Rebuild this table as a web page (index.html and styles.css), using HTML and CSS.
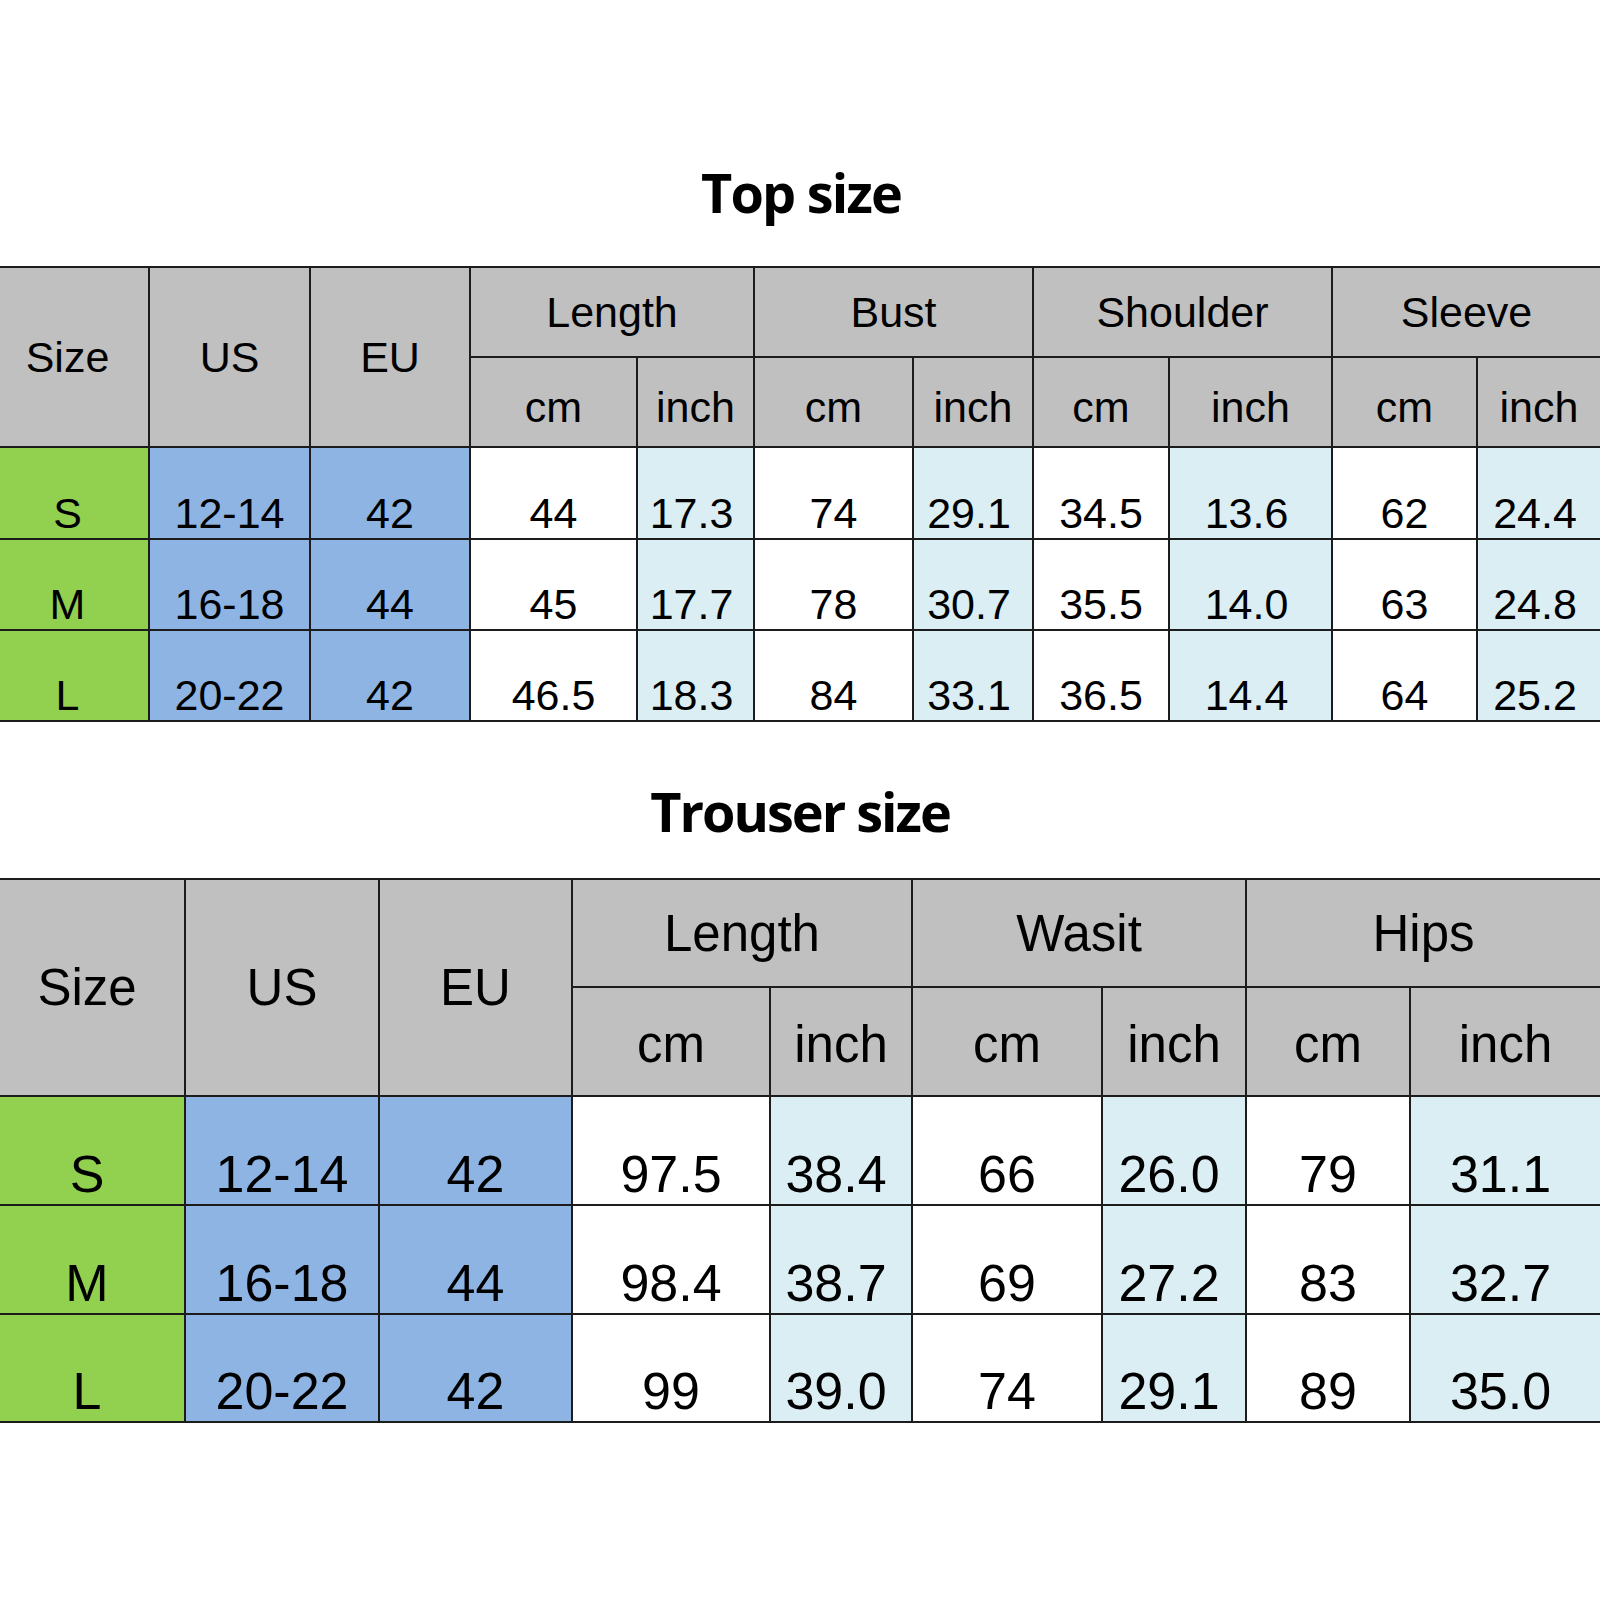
FILE: index.html
```html
<!DOCTYPE html>
<html lang="en">
<head>
<meta charset="utf-8">
<title>Size chart</title>
<link rel="stylesheet" href="styles.css">
</head>
<body>
<section class="chart chart-top">
  <h2 class="title">Top size</h2>
  <div class="grid grid-top">
    <div class="c h span-r">Size</div>
    <div class="c h span-r">US</div>
    <div class="c h span-r">EU</div>
    <div class="c h span-c">Length</div>
    <div class="c h span-c">Bust</div>
    <div class="c h span-c">Shoulder</div>
    <div class="c h span-c last">Sleeve</div>
    <div class="c h sub">cm</div><div class="c h sub">inch</div>
    <div class="c h sub">cm</div><div class="c h sub">inch</div>
    <div class="c h sub">cm</div><div class="c h sub">inch</div>
    <div class="c h sub">cm</div><div class="c h sub last">inch</div>

    <div class="c d green">S</div><div class="c d blue">12-14</div><div class="c d blue">42</div>
    <div class="c d white">44</div><div class="c d light">17.3</div>
    <div class="c d white">74</div><div class="c d light">29.1</div>
    <div class="c d white">34.5</div><div class="c d light">13.6</div>
    <div class="c d white">62</div><div class="c d light last">24.4</div>

    <div class="c d green">M</div><div class="c d blue">16-18</div><div class="c d blue">44</div>
    <div class="c d white">45</div><div class="c d light">17.7</div>
    <div class="c d white">78</div><div class="c d light">30.7</div>
    <div class="c d white">35.5</div><div class="c d light">14.0</div>
    <div class="c d white">63</div><div class="c d light last">24.8</div>

    <div class="c d green">L</div><div class="c d blue">20-22</div><div class="c d blue">42</div>
    <div class="c d white">46.5</div><div class="c d light">18.3</div>
    <div class="c d white">84</div><div class="c d light">33.1</div>
    <div class="c d white">36.5</div><div class="c d light">14.4</div>
    <div class="c d white">64</div><div class="c d light last">25.2</div>
  </div>
</section>

<section class="chart chart-bottom">
  <h2 class="title">Trouser size</h2>
  <div class="grid grid-bottom">
    <div class="c h span-r">Size</div>
    <div class="c h span-r">US</div>
    <div class="c h span-r">EU</div>
    <div class="c h span-c">Length</div>
    <div class="c h span-c">Wasit</div>
    <div class="c h span-c last">Hips</div>
    <div class="c h sub">cm</div><div class="c h sub">inch</div>
    <div class="c h sub">cm</div><div class="c h sub">inch</div>
    <div class="c h sub">cm</div><div class="c h sub last">inch</div>

    <div class="c d green">S</div><div class="c d blue">12-14</div><div class="c d blue">42</div>
    <div class="c d white">97.5</div><div class="c d light">38.4</div>
    <div class="c d white">66</div><div class="c d light">26.0</div>
    <div class="c d white">79</div><div class="c d light last">31.1</div>

    <div class="c d green">M</div><div class="c d blue">16-18</div><div class="c d blue">44</div>
    <div class="c d white">98.4</div><div class="c d light">38.7</div>
    <div class="c d white">69</div><div class="c d light">27.2</div>
    <div class="c d white">83</div><div class="c d light last">32.7</div>

    <div class="c d green">L</div><div class="c d blue">20-22</div><div class="c d blue">42</div>
    <div class="c d white">99</div><div class="c d light">39.0</div>
    <div class="c d white">74</div><div class="c d light">29.1</div>
    <div class="c d white">89</div><div class="c d light last">35.0</div>
  </div>
</section>
</body>
</html>
```
FILE: styles.css
```css
html, body {
  margin: 0;
  padding: 0;
  background: #ffffff;
}

body {
  width: 1600px;
  overflow: hidden;
  font-family: "Liberation Sans", Arial, sans-serif;
  color: #000;
}

.chart {
  display: flex;
  flex-direction: column;
}

.title {
  margin: 0;
  height: 76px;
  line-height: 76px;
  font-family: "Open Sans", "Noto Sans", sans-serif;
  font-weight: 700;
  font-size: 54px;
  letter-spacing: -1.8px;
  text-align: center;
  color: #000;
}

.chart-top {
  padding-top: 154px;
}

.chart-top .title {
  margin-bottom: 36px;
  padding-left: 2px;
}

.chart-bottom {
  padding-top: 51px;
}

.chart-bottom .title {
  margin-bottom: 29px;
  letter-spacing: -2px;
}

.grid {
  display: grid;
  border-top: 2px solid #1c1c1c;
}

.grid-top {
  width: 1613px;
  margin-left: -13px;
  grid-template-columns: 163px 161px 160px 167px 117px 159px 120px 136px 163px 145px 122px;
  grid-template-rows: 90px 90px 92px 91px 91px;
  font-size: 43px;
}

.grid-bottom {
  width: 1610px;
  margin-left: -10px;
  grid-template-columns: 196px 194px 193px 198px 142px 190px 144px 164px 189px;
  grid-template-rows: 108px 109px 109px 109px 108px;
  font-size: 52px;
}

.grid-bottom .h {
  font-size: 51px;
}

.c {
  box-sizing: border-box;
  border-right: 2px solid #1c1c1c;
  border-bottom: 2px solid #1c1c1c;
  display: flex;
  justify-content: center;
  white-space: nowrap;
}

.c.last {
  border-right: 0;
}

.h {
  background: #c0c0c0;
  align-items: center;
}

.span-r {
  grid-row: span 2;
}

.span-c {
  grid-column: span 2;
}

.sub {
  padding-top: 10px;
}

.grid-bottom .sub {
  padding-top: 6px;
}

.d {
  align-items: flex-end;
}

.green {
  background: #92d050;
}

.blue {
  background: #8db4e2;
}

.white {
  background: #ffffff;
}

.light {
  background: #daeef3;
  padding-right: 8px;
}

.grid-bottom .light {
  padding-right: 10px;
}
```
